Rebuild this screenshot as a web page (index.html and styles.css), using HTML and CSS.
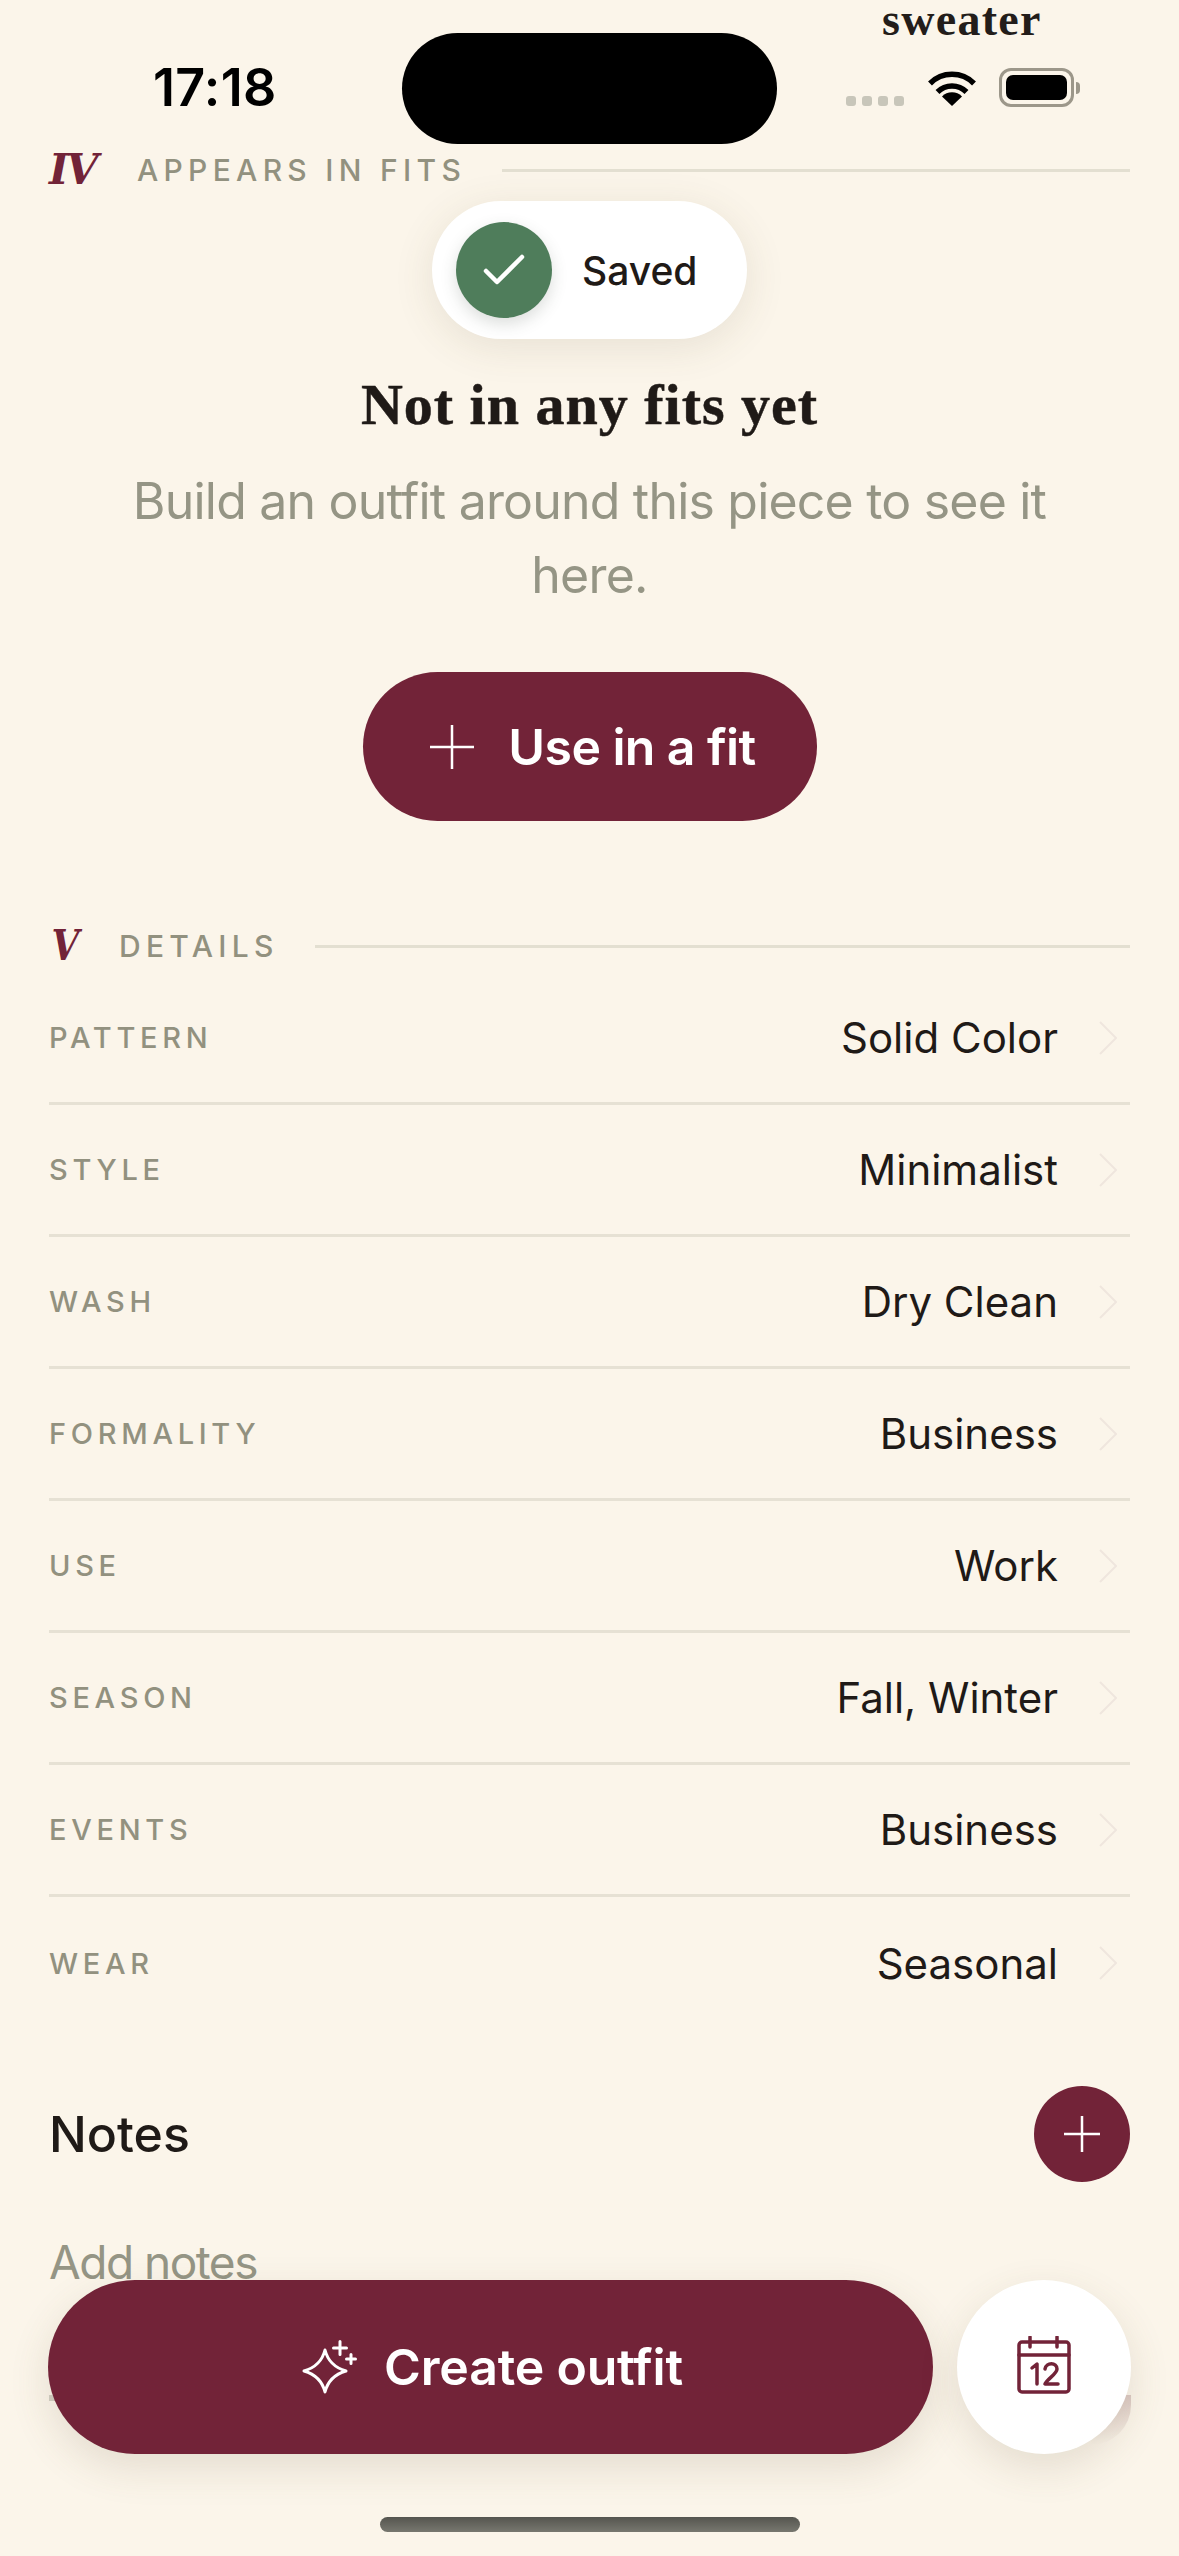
FILE: index.html
```html
<!DOCTYPE html>
<html lang="en">
<head>
    <meta charset="UTF-8">
    <meta name="viewport" content="width=device-width, initial-scale=1.0">
    <title>Sweater</title>
    <link rel="stylesheet" href="styles.css">
</head>
<body>
    <div class="screen">
        <!-- Status bar -->
        <div class="status-bar">
            <span class="time">17:18</span>
            <div class="island"></div>
            <div class="status-icons">
                <span class="signal"><i></i><i></i><i></i><i></i></span>
                <svg class="wifi" width="50" height="36" viewBox="0 0 50 36">
                    <path d="M25 36 15 26.500a14 14 0 0 1 20 0Z" fill="#000"/>
                    <path d="M10.500 22a20.500 20.500 0 0 1 29 0" fill="none" stroke="#000" stroke-width="5.500"/>
                    <path d="M3 13.500a31 31 0 0 1 44 0" fill="none" stroke="#000" stroke-width="5.500"/>
                </svg>
                <span class="battery"><span class="battery-fill"></span></span>
                <span class="battery-cap"></span>
            </div>
        </div>
        <span class="nav-title">sweater</span>

        <div class="section-head head-iv">
            <span class="numeral">IV</span>
            <span class="section-label">APPEARS IN FITS</span>
            <span class="section-line"></span>
        </div>

        <!-- Empty state -->
        <div class="empty-state">
            <h2>Not in any fits yet</h2>
            <p>Build an outfit around this piece to see it here.</p>
            <button class="use-btn">
                <svg width="46" height="46" viewBox="0 0 46 46"><path d="M23 1v44M1 23h44" stroke="#fff" stroke-width="2.500"/></svg>
                Use in a fit
            </button>
        </div>

        <div class="section-head head-v">
            <span class="numeral">V</span>
            <span class="section-label">DETAILS</span>
            <span class="section-line"></span>
        </div>

        <div class="details">
            <div class="row"><span class="row-label">PATTERN</span><span class="row-value">Solid Color</span><svg class="chevron" width="18" height="34" viewBox="0 0 18 34"><path d="M1 1l16 16L1 33"/></svg></div>
            <div class="row"><span class="row-label">STYLE</span><span class="row-value">Minimalist</span><svg class="chevron" width="18" height="34" viewBox="0 0 18 34"><path d="M1 1l16 16L1 33"/></svg></div>
            <div class="row"><span class="row-label">WASH</span><span class="row-value">Dry Clean</span><svg class="chevron" width="18" height="34" viewBox="0 0 18 34"><path d="M1 1l16 16L1 33"/></svg></div>
            <div class="row"><span class="row-label">FORMALITY</span><span class="row-value">Business</span><svg class="chevron" width="18" height="34" viewBox="0 0 18 34"><path d="M1 1l16 16L1 33"/></svg></div>
            <div class="row"><span class="row-label">USE</span><span class="row-value">Work</span><svg class="chevron" width="18" height="34" viewBox="0 0 18 34"><path d="M1 1l16 16L1 33"/></svg></div>
            <div class="row"><span class="row-label">SEASON</span><span class="row-value">Fall, Winter</span><svg class="chevron" width="18" height="34" viewBox="0 0 18 34"><path d="M1 1l16 16L1 33"/></svg></div>
            <div class="row"><span class="row-label">EVENTS</span><span class="row-value">Business</span><svg class="chevron" width="18" height="34" viewBox="0 0 18 34"><path d="M1 1l16 16L1 33"/></svg></div>
            <div class="row"><span class="row-label">WEAR</span><span class="row-value">Seasonal</span><svg class="chevron" width="18" height="34" viewBox="0 0 18 34"><path d="M1 1l16 16L1 33"/></svg></div>
        </div>

        <div class="notes-head">
            <h3>Notes</h3>
            <button class="notes-add">
                <svg width="36" height="36" viewBox="0 0 36 36"><path d="M18 0v36M0 18h36" stroke="#fff" stroke-width="2.500"/></svg>
            </button>
        </div>
        <p class="notes-empty">Add notes</p>

        <!-- Saved toast -->
        <div class="toast">
            <span class="toast-icon">
                <svg width="42" height="32" viewBox="0 0 42 32"><path d="M3 17l11 11L39 3" fill="none" stroke="#fff" stroke-width="4.500" stroke-linecap="round" stroke-linejoin="round"/></svg>
            </span>
            <span class="toast-text">Saved</span>
        </div>

        <!-- Bottom actions -->
        <div class="peek-left"></div>
        <div class="peek-right"></div>
        <div class="bottom-bar">
            <button class="create-btn">
                <svg width="56" height="56" viewBox="0 0 56 56" fill="none" stroke="#fff" stroke-width="3" stroke-linejoin="round" stroke-linecap="round">
                    <path d="M23 11Q27 27 44 32Q27 37 23 53Q19 37 2 32Q19 27 23 11Z"/>
                    <path d="M38 2.500v13M31.500 9h13M49 15.500v9M44.500 20h9"/>
                </svg>
                Create outfit
            </button>
            <button class="calendar-btn">
                <svg width="54" height="58" viewBox="0 0 54 58" fill="none" stroke="#722338" stroke-width="3.500" stroke-linecap="round" stroke-linejoin="round">
                    <rect x="2" y="6" width="50" height="50" rx="3"/>
                    <path d="M2 19h50M13 1v10M40 1v10"/>
                    <path d="M15 32l5-4v20M28 33c1-7 12-7 12 0c0 5-10 10-12 15h13"/>
                </svg>
            </button>
        </div>
        <div class="home-indicator"></div>
    </div>
</body>
</html>
```

FILE: styles.css
```css
* {
    box-sizing: border-box;
}
body {
    margin: 0;
    background-color: #fbf5ea;
    font-family: Inter, 'Liberation Sans', sans-serif;
    color: #1f1a17;
}
button {
    border: none;
    font-family: inherit;
    padding: 0;
}
.screen {
    position: relative;
    width: 1179px;
    height: 2556px;
    overflow: hidden;
    padding: 0 49px;
}
.status-bar {
    height: 144px;
    margin: 0 -49px;
    padding-top: 33px;
    position: relative;
    display: flex;
    justify-content: center;
}
.island {
    width: 375px;
    height: 111px;
    border-radius: 56px;
    background-color: #000;
}
.time {
    position: absolute;
    left: 153px;
    top: 58px;
    font-size: 52px;
    line-height: 60px;
    font-weight: 600;
    letter-spacing: 0.3px;
    color: #000;
}
.status-icons {
    position: absolute;
    left: 846px;
    top: 68px;
    display: flex;
    align-items: center;
}
.signal {
    display: flex;
    gap: 6px;
    margin-top: 26px;
    margin-right: 23px;
}
.signal i {
    width: 10px;
    height: 10px;
    border-radius: 3px;
    background-color: #c8c6ba;
}
.wifi {
    margin-right: 22px;
}
.battery {
    width: 75px;
    height: 39px;
    padding: 4px;
    border: 3px solid #9c978a;
    border-radius: 12px;
}
.battery-fill {
    display: block;
    height: 100%;
    background-color: #000;
    border-radius: 7px;
}
.battery-cap {
    width: 4px;
    height: 12px;
    margin-left: 2px;
    background-color: #9c978a;
    border-radius: 0 4px 4px 0;
}
.nav-title {
    position: absolute;
    left: 882px;
    top: 0;
    font-family: 'Liberation Serif', serif;
    font-weight: 700;
    font-size: 46px;
    line-height: 40px;
    letter-spacing: 1.3px;
    color: #231d1a;
}
.section-head {
    display: flex;
    align-items: center;
}
.head-iv {
    height: 52px;
}
.head-v {
    height: 52px;
    margin-top: 99px;
}
.numeral {
    font-family: 'DejaVu Serif', serif;
    font-weight: 700;
    font-style: italic;
    font-size: 42px;
    line-height: 52px;
    letter-spacing: -3px;
    color: #722338;
}
.head-iv .numeral {
    width: 88px;
}
.head-v .numeral {
    width: 70px;
    padding-left: 3px;
    transform: scaleX(0.85);
    transform-origin: left;
}
.section-label {
    font-size: 30px;
    font-weight: 500;
    letter-spacing: 5.300px;
    color: #92917f;
    white-space: nowrap;
}
.section-line {
    flex: 1;
    height: 3px;
    background-color: #e3dfd1;
}
.head-iv .section-line {
    margin-left: 36px;
}
.head-v .section-line {
    margin-left: 36px;
}
.empty-state {
    margin-top: 175px;
    text-align: center;
}
.empty-state h2 {
    margin: 0;
    font-family: 'Liberation Serif', serif;
    font-weight: 700;
    font-size: 58px;
    line-height: 68px;
    letter-spacing: 1px;
    -webkit-text-stroke: 0.5px #1f1a17;
    color: #1f1a17;
}
.empty-state p {
    margin: 25px auto 0;
    width: 930px;
    font-size: 50px;
    line-height: 74px;
    letter-spacing: -0.8px;
    color: #959585;
}
.use-btn {
    margin-top: 60px;
    width: 454px;
    height: 149px;
    padding-left: 6px;
    border-radius: 75px;
    background-color: #722338;
    color: #fff;
    font-size: 50px;
    font-weight: 600;
    letter-spacing: -0.6px;
    display: inline-flex;
    align-items: center;
    justify-content: center;
    gap: 33px;
}
.details {
    margin-top: 1px;
}
.row {
    height: 132px;
    display: flex;
    align-items: center;
    border-bottom: 3px solid #e6e1d4;
}
.row:last-child {
    border-bottom: none;
}
.row-label {
    flex: 1;
    font-size: 29px;
    font-weight: 500;
    letter-spacing: 4.700px;
    color: #92917f;
}
.row-value {
    font-size: 42px;
    color: #1f1a17;
}
.chevron {
    margin-left: 41px;
    margin-right: 13px;
    fill: none;
    stroke: #efe6de;
    stroke-width: 2;
}
.notes-head {
    margin-top: 57px;
    display: flex;
    align-items: center;
    justify-content: space-between;
}
.notes-head h3 {
    margin: 0;
    font-size: 50px;
    font-weight: 500;
}
.notes-add {
    width: 96px;
    height: 96px;
    border-radius: 50%;
    background-color: #722338;
    display: flex;
    align-items: center;
    justify-content: center;
}
.notes-empty {
    margin: 52px 0 0;
    font-size: 46px;
    line-height: 56px;
    letter-spacing: -1.500px;
    color: #959585;
}
.toast {
    position: absolute;
    left: 432px;
    top: 201px;
    width: 315px;
    height: 138px;
    border-radius: 69px;
    background-color: #fff;
    box-shadow: 0 8px 40px rgba(90, 80, 50, 0.12);
    display: flex;
    align-items: center;
    padding-left: 24px;
    gap: 30px;
}
.toast-icon {
    width: 96px;
    height: 96px;
    border-radius: 50%;
    background-color: #4f7d5b;
    box-shadow: 0 6px 16px rgba(60, 70, 60, 0.18);
    display: flex;
    align-items: center;
    justify-content: center;
}
.toast-text {
    font-size: 39px;
    font-weight: 500;
}
/* bits of the card scrolled under the buttons */
.peek-left {
    position: absolute;
    left: 49px;
    top: 2395px;
    width: 8px;
    height: 6px;
    background-color: #d3cfc4;
}
.peek-right {
    position: absolute;
    left: 1091px;
    top: 2395px;
    width: 40px;
    height: 50px;
    border-radius: 0 0 40px 0;
    background: linear-gradient(rgba(120, 60, 70, 0.24), rgba(120, 60, 70, 0));
}
.bottom-bar {
    position: absolute;
    left: 48px;
    top: 2280px;
    width: 1083px;
    display: flex;
    gap: 24px;
}
.create-btn {
    flex: 1;
    height: 174px;
    padding-left: 4px;
    border-radius: 87px;
    background-color: #722338;
    color: #fff;
    font-size: 50px;
    font-weight: 600;
    letter-spacing: -0.2px;
    box-shadow: 0 14px 40px rgba(90, 80, 50, 0.14);
    display: flex;
    align-items: center;
    justify-content: center;
    gap: 26px;
}
.calendar-btn {
    width: 174px;
    height: 174px;
    border-radius: 50%;
    background-color: #fff;
    box-shadow: 0 14px 40px rgba(90, 80, 50, 0.14);
    display: flex;
    align-items: center;
    justify-content: center;
}
.calendar-btn svg {
    margin-bottom: 5px;
}
.home-indicator {
    position: absolute;
    left: 380px;
    top: 2517px;
    width: 420px;
    height: 15px;
    border-radius: 8px;
    background: linear-gradient(#55554f, #77776f);
}
```
